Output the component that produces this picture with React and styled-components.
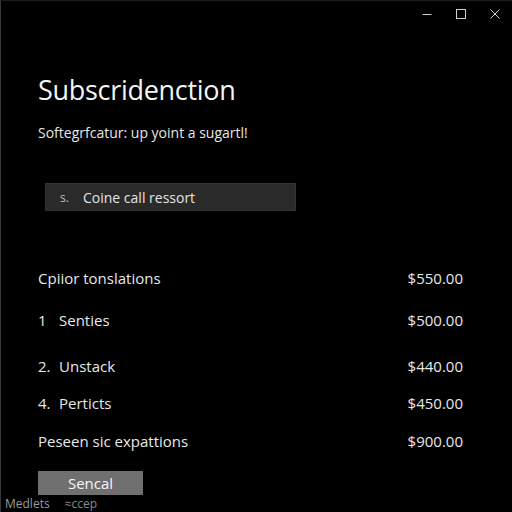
import React from "react";
import styled, { createGlobalStyle } from "styled-components";

const GlobalStyle = createGlobalStyle`
  html, body {
    margin: 0;
    padding: 0;
    background: #000;
  }
  body {
    font-family: "Open Sans", "Noto Sans", sans-serif;
    color: #ececec;
  }
`;

const rows = [
  { num: "", label: "Cpiior tonslations", price: "$550.00", space: 56 },
  { num: "1", label: "Senties", price: "$500.00", space: 20 },
  { num: "2.", label: "Unstack", price: "$440.00", space: 24 },
  { num: "4.", label: "Perticts", price: "$450.00", space: 15 },
  { num: "", label: "Peseen sic expattions", price: "$900.00", space: 16 },
];

function App() {
  return (
    <>
      <GlobalStyle />
      <Window>
        <TitleBar>
          <Control aria-label="Minimize">
            <svg width="10" height="10" viewBox="0 0 10 10">
              <path d="M0.5 5.5h9" stroke="#cfcfcf" strokeWidth="1" />
            </svg>
          </Control>
          <Control aria-label="Maximize">
            <svg width="10" height="10" viewBox="0 0 10 10">
              <rect x="0.5" y="0.5" width="9" height="9" fill="none" stroke="#cfcfcf" strokeWidth="1" />
            </svg>
          </Control>
          <Control aria-label="Close">
            <svg width="10" height="10" viewBox="0 0 10 10">
              <path d="M0.5 0.5l9 9M9.5 0.5l-9 9" stroke="#cfcfcf" strokeWidth="1" />
            </svg>
          </Control>
        </TitleBar>

        <Content>
          <Title>Subscridenction</Title>
          <Subtitle>Softegrfcatur: up yoint a sugartl!</Subtitle>

          <SearchBox>
            <SearchMark>s.</SearchMark>
            <SearchText>Coine call ressort</SearchText>
          </SearchBox>

          {rows.map((r) => (
            <Row key={r.label} $space={r.space}>
              <RowLabel>
                {r.num && <RowNum>{r.num}</RowNum>}
                {r.label}
              </RowLabel>
              <Price>{r.price}</Price>
            </Row>
          ))}

          <Button>Sencal</Button>
        </Content>

        <Footer>
          <span>Medlets</span>
          <FooterMuted>≈ccep</FooterMuted>
        </Footer>
      </Window>
    </>
  );
}
export default App;

const Window = styled.div`
  width: 512px;
  height: 512px;
  box-sizing: border-box;
  background: #000;
  border-left: 1px solid #3a3a3a;
  border-top: 1px solid #1c1c1c;
  overflow: hidden;
  display: flex;
  flex-direction: column;
`;

const TitleBar = styled.div`
  height: 26px;
  display: flex;
  justify-content: flex-end;
  align-items: center;
`;

const Control = styled.div`
  width: 34px;
  height: 26px;
  display: flex;
  align-items: center;
  justify-content: center;
`;

const Content = styled.div`
  padding: 0 49px 0 37px;
  display: flex;
  flex-direction: column;
`;

const Title = styled.h1`
  margin: 45px 0 0;
  font-size: 27px;
  line-height: 36px;
  font-weight: 400;
  color: #f4f4f4;
  letter-spacing: -0.3px;
`;

const Subtitle = styled.p`
  margin: 15px 0 0;
  font-size: 14px;
  line-height: 20px;
  color: #e6e6e6;
`;

const SearchBox = styled.div`
  margin: 40px 0 0 7px;
  width: 251px;
  height: 28px;
  box-sizing: border-box;
  background: #2a2a2a;
  border: 1px solid #333;
  display: flex;
  align-items: center;
  padding-left: 14px;
`;

const SearchMark = styled.span`
  font-size: 12px;
  color: #bdbdbd;
  width: 23px;
`;

const SearchText = styled.span`
  font-size: 14px;
  color: #e4e4e4;
`;

const Row = styled.div`
  margin-top: ${(p) => p.$space}px;
  height: 22px;
  display: flex;
  align-items: center;
  justify-content: space-between;
  font-size: 15px;
  color: #e8e8e8;
`;

const RowLabel = styled.div`
  display: flex;
  align-items: center;
`;

const RowNum = styled.span`
  width: 21px;
`;

const Price = styled.span`
  font-size: 15px;
`;

const Button = styled.div`
  margin-top: 19px;
  width: 105px;
  height: 24px;
  background: #6f6f6f;
  color: #f6f6f6;
  font-size: 15px;
  display: flex;
  align-items: center;
  justify-content: center;
`;

const Footer = styled.div`
  margin-top: 2px;
  padding-left: 4px;
  display: flex;
  gap: 15px;
  font-size: 12px;
  line-height: 14px;
  color: #9a9a9a;
`;

const FooterMuted = styled.span`
  color: #8a8a8a;
`;
